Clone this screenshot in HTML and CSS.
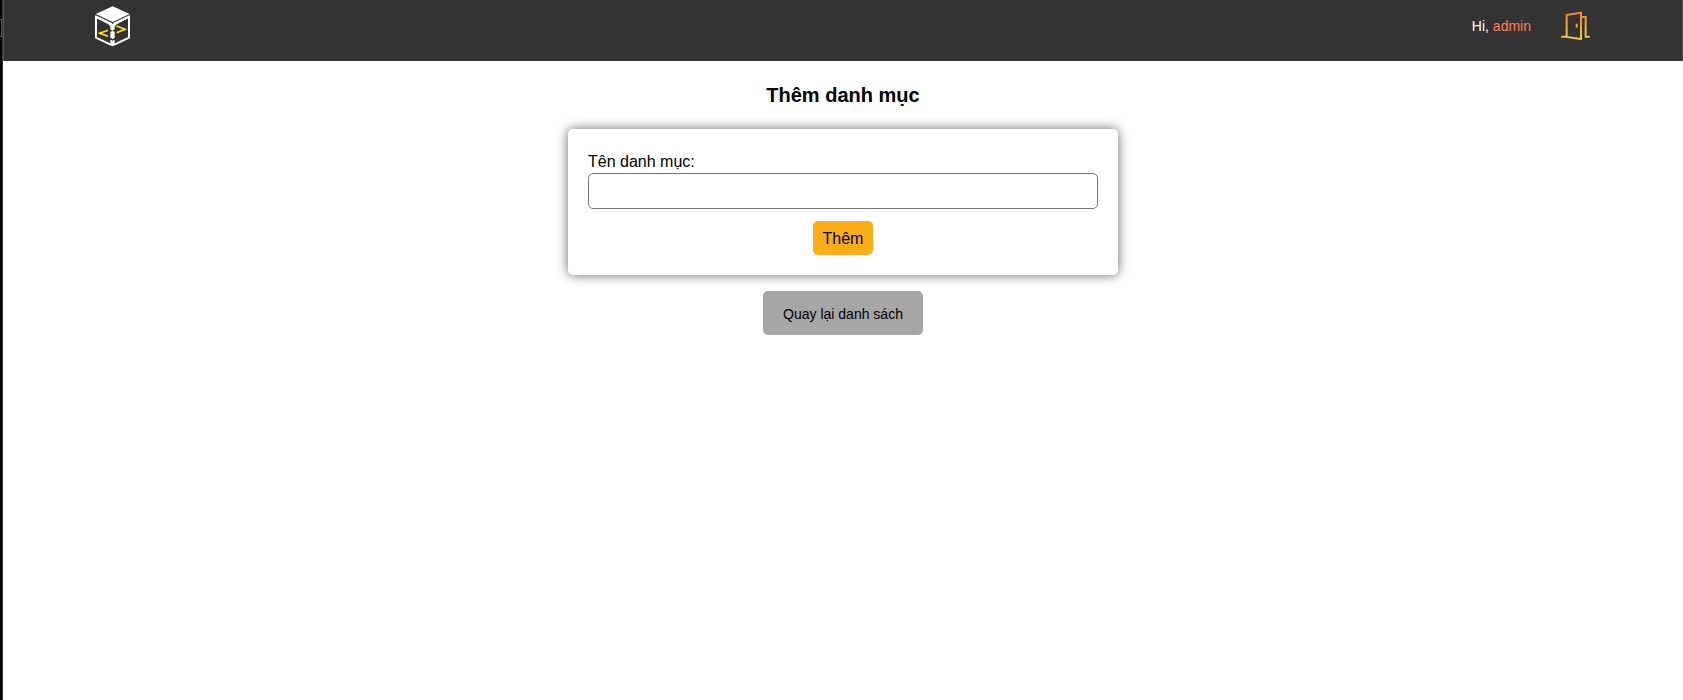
FILE: index.html
```html
<!DOCTYPE html>
<html lang="vi">
<head>
<meta charset="utf-8">
<title>Thêm danh mục</title>
<link rel="stylesheet" href="styles.css">
</head>
<body>
<div class="edge"><span class="edge-handle"></span></div>
<div class="page">
  <header class="header">
    <a class="logo" href="#" aria-label="Trang chủ">
      <svg width="55" height="50" viewBox="0 0 165 150" fill="none">
        <path d="M83 19 134 42 83 66 32 42Z" fill="#fff"/>
        <path d="M33 48V113L77 134M132 48V113L88 134" stroke="#fff" stroke-width="6"/>
        <path d="M30 45 81 69V77L76 80 70 73 33 54ZM135 45 84 69V77L89 80 95 73 132 54Z" fill="#fff"/>
        <path d="M76 72H89V88L83 92 76 88ZM76 95 83 93 89 95V113L83 117 76 113ZM76 119 83 122 89 119V136L83 139 76 136Z" fill="#fff"/>
        <path d="M69 91 44 100 69 109M95 78 120 88 95 98" stroke="#ffe414" stroke-width="5"/>
      </svg>
    </a>
    <div class="user">
      <p class="greeting">Hi, <span class="name">admin</span></p>
      <a class="logout" href="#" aria-label="Đăng xuất">
        <svg width="30" height="30" viewBox="0 0 90 90" fill="none">
          <defs>
            <linearGradient id="door" gradientUnits="userSpaceOnUse" x1="0" y1="5" x2="0" y2="88">
              <stop offset="0" stop-color="#ef7f2f"/>
              <stop offset="1" stop-color="#f6cb3a"/>
            </linearGradient>
          </defs>
          <path d="M4 80H19M20 15 63 8V87L20 81ZM66 21H77V80H89" stroke="url(#door)" stroke-width="6"/>
          <path d="M50 41V53" stroke="url(#door)" stroke-width="6"/>
        </svg>
      </a>
    </div>
  </header>
  <main class="main">
    <h1 class="title">Thêm danh mục</h1>
    <form class="card">
      <label class="label" for="category">Tên danh mục:</label>
      <input class="input" id="category" type="text">
      <button class="submit" type="submit">Thêm</button>
    </form>
    <button class="back" type="button">Quay lại danh sách</button>
  </main>
</div>
</body>
</html>
```
FILE: styles.css
```css
* { box-sizing: border-box; }
body {
  margin: 0;
  min-height: 100vh;
  display: flex;
  background: #fff;
  color: #000;
  font-family: "Liberation Sans", Arial, sans-serif;
}
.edge {
  width: 3px;
  flex: none;
  padding-top: 19px;
  background: #000;
  border-right: 1px solid #333;
}
.edge-handle {
  display: block;
  height: 18px;
  border: 1px solid #555;
  border-left: 0;
}
.page { flex: 1; }
.header {
  display: flex;
  justify-content: space-between;
  align-items: flex-start;
  height: 61px;
  padding: 0 92px 0 81px;
  background: #333;
  border: solid #555;
  border-width: 0 1px;
}
.logo, .logout { display: block; }
.logo svg, .logout svg { display: block; }
.user {
  display: flex;
  align-items: center;
  gap: 29px;
  height: 50px;
}
.greeting {
  margin: 0;
  padding-top: 2px;
  color: #fff;
  font-size: 14px;
  line-height: 20px;
}
.name { color: #ff7f50; }
.main {
  display: flex;
  flex-direction: column;
  align-items: center;
  padding: 22px 16px;
}
.title {
  margin: 0 0 22px;
  font-size: 20px;
  line-height: 24px;
}
.card {
  display: flex;
  flex-direction: column;
  width: 100%;
  max-width: 550px;
  padding: 22px 20px 20px;
  border-radius: 5px;
  background: #fff;
  box-shadow: 0 0 12px rgba(0, 0, 0, 0.6);
}
.label {
  font-size: 16px;
  line-height: 22px;
}
.input {
  height: 36px;
  padding: 0 10px;
  border: 1px solid #767676;
  border-radius: 5px;
  background: #fff;
  font: inherit;
}
.submit {
  align-self: center;
  margin-top: 12px;
  padding: 9px 10px 7px;
  border: 0;
  border-radius: 5px;
  background: #fdad15;
  color: #000;
  font-family: inherit;
  font-size: 16px;
  line-height: 18px;
}
.back {
  margin-top: 16px;
  padding: 15px 20px 13px;
  border: 0;
  border-radius: 5px;
  background: #a6a6a6;
  color: #000;
  font-family: inherit;
  font-size: 14px;
  line-height: 16px;
}
```
